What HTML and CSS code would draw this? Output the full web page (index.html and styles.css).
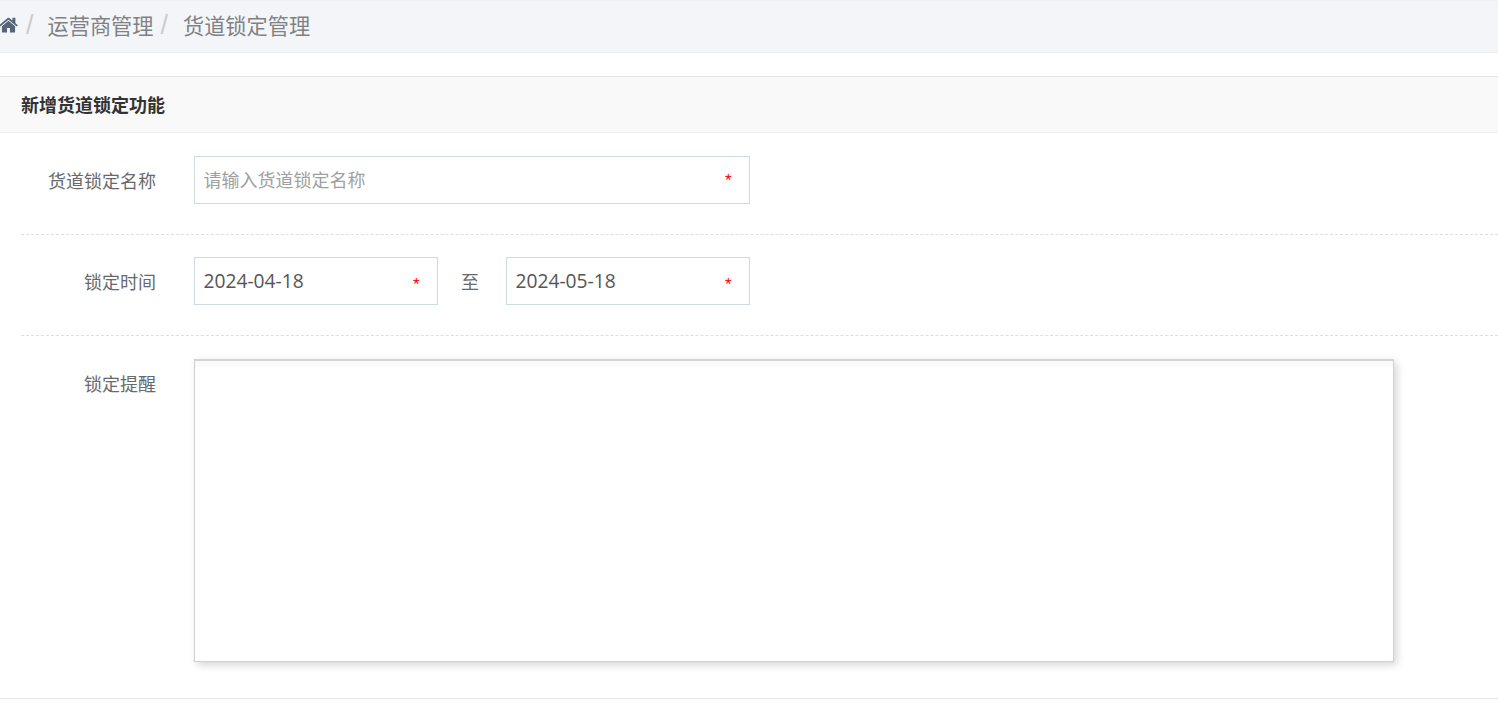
FILE: index.html
```html
<!DOCTYPE html>
<html lang="zh-CN">
<head>
<meta charset="utf-8">
<title>新增货道锁定功能</title>
<link rel="stylesheet" href="styles.css">
</head>
<body>
<nav class="crumbs">
  <svg class="home" viewBox="0 0 1664 1408" aria-hidden="true"><path d="M1408 768v480q0 26-19 45t-45 19H960V928H704v384H320q-26 0-45-19t-19-45V768q0-1 .5-3t.5-3l575-474 575 474q1 2 1 6zm223-69-62 74q-8 9-21 11h-3q-13 0-21-7L832 200 140 777q-12 8-24 7-13-2-21-11l-62-74q-8-10-7-23.500t11-21.500L756 41q32-26 76-26t76 26l272 227V51q0-14 9-23t23-9h192q14 0 23 9t9 23v454l219 182q10 8 11 21.500t-7 23.500z"/></svg>
  <span class="sep">/</span>
  <span class="crumb">运营商管理</span>
  <span class="sep sep-b">/</span>
  <span class="crumb crumb-last">货道锁定管理</span>
</nav>
<main class="panel">
  <h2 class="panel-title">新增货道锁定功能</h2>
  <form class="form">
    <div class="row row-name">
      <label class="label">货道锁定名称</label>
      <div class="field field-wide">
        <input class="input" type="text" placeholder="请输入货道锁定名称">
        <span class="star">*</span>
      </div>
    </div>
    <div class="row row-date">
      <label class="label">锁定时间</label>
      <div class="field field-date">
        <input class="input" type="text" value="2024-04-18">
        <span class="star">*</span>
      </div>
      <span class="to">至</span>
      <div class="field field-date">
        <input class="input" type="text" value="2024-05-18">
        <span class="star">*</span>
      </div>
    </div>
    <div class="row row-editor">
      <label class="label label-top">锁定提醒</label>
      <div class="editor"><div class="editor-bar"></div></div>
    </div>
  </form>
</main>
<div class="foot"></div>
</body>
</html>
```

FILE: styles.css
```css
* { box-sizing: border-box; }
html, body { margin: 0; padding: 0; }
body {
  height: 702px;
  overflow: hidden;
  background: #fff;
  color: #676a6c;
  font-family: "Noto Sans CJK SC", "Open Sans", sans-serif;
  font-size: 16px;
}
.crumbs {
  display: flex;
  align-items: center;
  height: 53px;
  padding-bottom: 3px;
  background: #f4f5f9;
  border-top: 1px solid #eff0f4;
  border-bottom: 1px solid #eceef2;
  font-size: 21.2px;
  color: #7f8284;
}
.home { width: 19px; height: 17px; fill: #56657a; margin-left: -1px; }
.sep { color: #ccc; margin-left: 8px; font-family: "Liberation Sans", sans-serif; font-size: 27px; }
.sep-b { margin-left: 7px; }
.crumb { margin-left: 14px; line-height: 1; }
.crumb-last { margin-left: 15px; }
.panel { margin-top: 23px; }
.panel-title {
  margin: 0;
  height: 57px;
  padding-left: 21px;
  padding-bottom: 2px;
  display: flex;
  align-items: center;
  background: #f9f9f9;
  border-top: 1px solid #e2e6e8;
  border-bottom: 1px solid #f0f0f0;
  font-size: 18px;
  font-weight: 700;
  color: #333;
}
.form { margin-left: 21px; }
.row { display: flex; align-items: center; }
.row-name { padding-top: 23px; padding-bottom: 30px; border-bottom: 1px dashed #dcdfe0; }
.row-date { padding-top: 22px; padding-bottom: 30px; border-bottom: 1px dashed #dcdfe0; }
.row-editor { align-items: flex-start; padding-top: 23px; }
.label {
  width: 135px;
  margin-right: 38px;
  text-align: right;
  font-size: 18px;
  line-height: 48px;
  color: #676a6c;
}
.label-top { line-height: 48px; }
.field { position: relative; height: 48px; }
.field-wide { width: 556px; }
.field-date { width: 244px; }
.input {
  display: block;
  width: 100%;
  height: 100%;
  padding: 0 40px 2px 8.500px;
  border: 1px solid #cddcdc;
  border-radius: 0;
  outline: 0;
  background: #fff;
  color: #555;
  font-family: "Open Sans", "Noto Sans CJK SC", sans-serif;
  font-size: 19.200px;
}
.input::placeholder { color: #a0a0a0; font-family: "Noto Sans CJK SC", sans-serif; font-size: 18px; opacity: 1; }
.star {
  position: absolute;
  top: 15px;
  right: 18.500px;
  color: #f00;
  font-family: "Liberation Sans", sans-serif;
  font-size: 17px;
  line-height: 20px;
}
.field-date .star { top: 18px; }
.to { width: 64px; margin-right: 4px; text-align: center; font-size: 18px; color: #676a6c; }
.editor {
  width: 1200px;
  height: 303px;
  background: #fff;
  border: 1px solid #d0d0d0;
  border-top: 2px solid #d4d4d4;
  box-shadow: 3px 3px 8px rgba(0, 0, 0, .16);
}
.editor-bar { height: 6px; background: #fafafa; }
.foot {
  position: absolute;
  left: 0;
  right: 0;
  top: 698px;
  height: 4px;
  background: #fcfcfd;
  border-top: 1px solid #e4e8ec;
}
```
